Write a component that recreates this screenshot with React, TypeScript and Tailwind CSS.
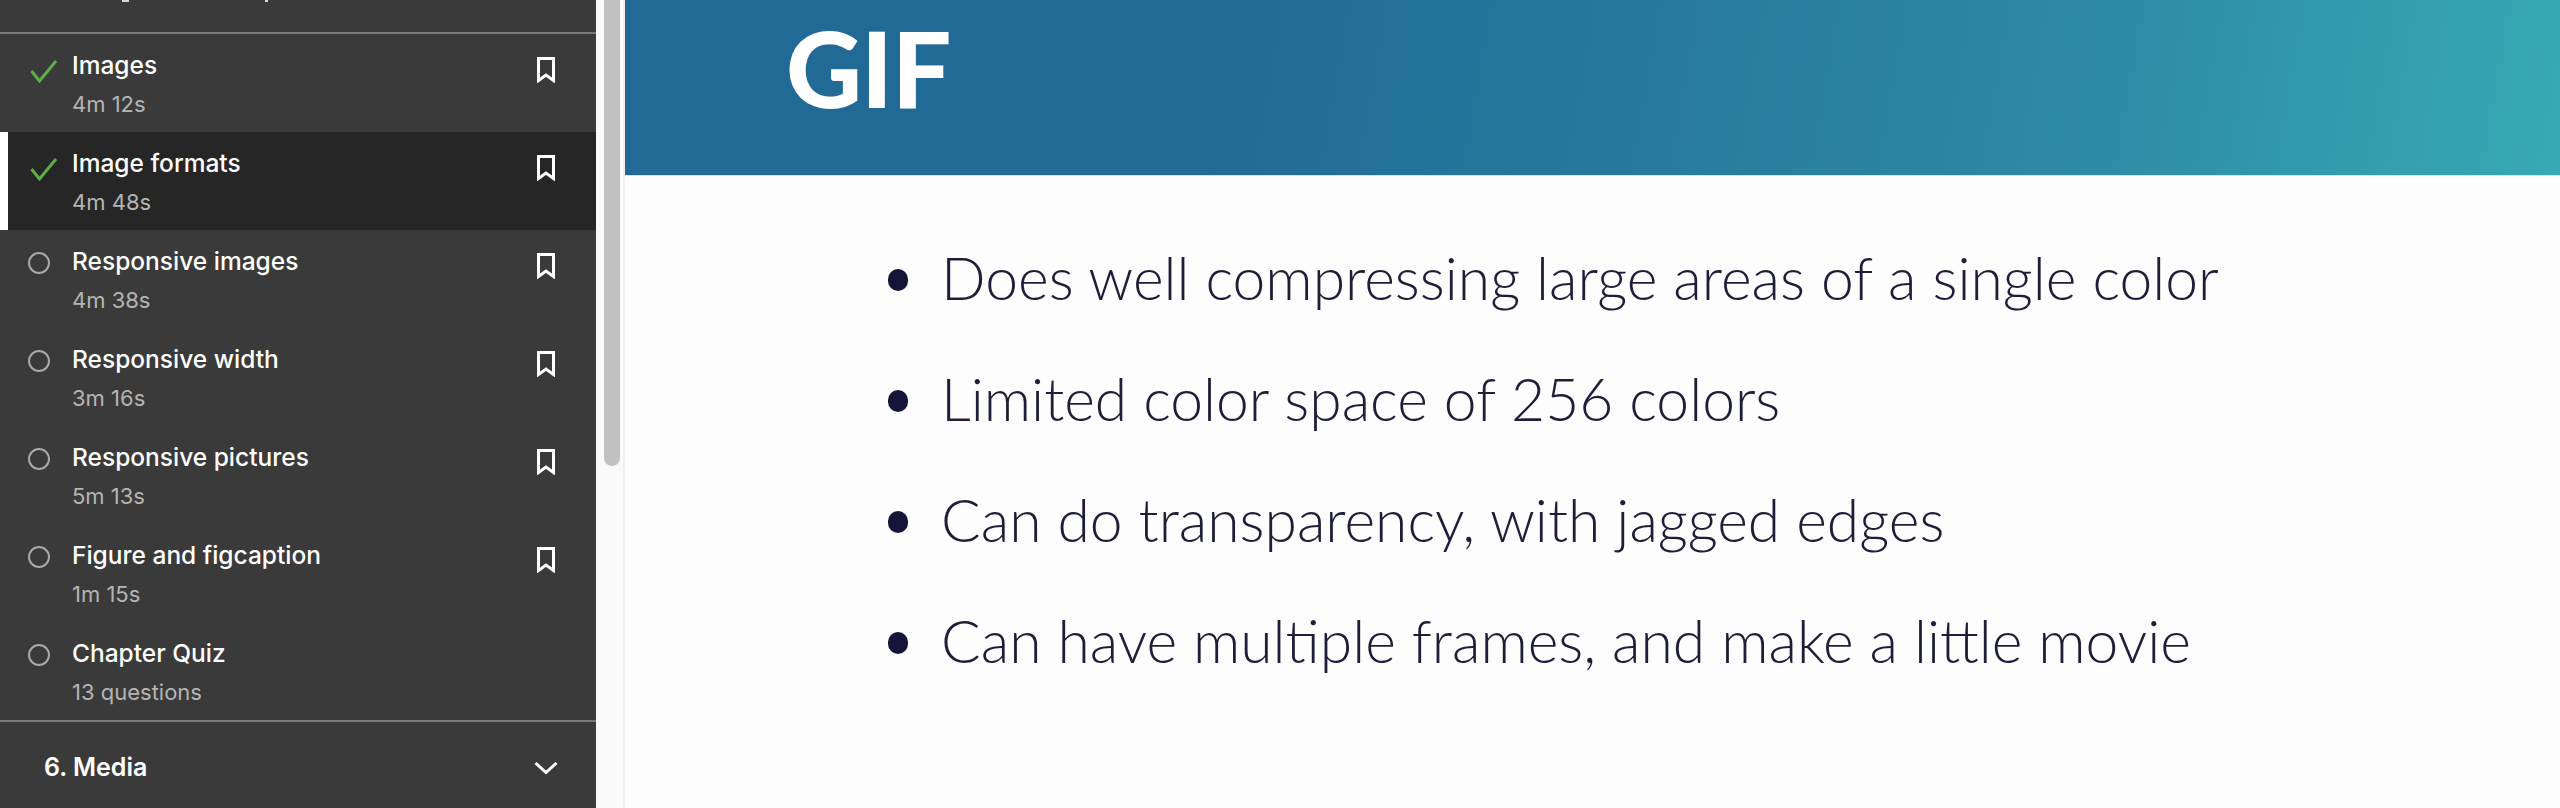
function Bookmark() {
  return (
    <svg width="22" height="26" viewBox="0 0 22 26" fill="none" className="shrink-0">
      <path d="M3.5 1.5H18.5V23.5L11 18L3.5 23.5Z" stroke="#fff" strokeWidth="3" />
    </svg>
  );
}
function Check() {
  return (
    <svg width="30" height="24" viewBox="0 0 30 24" fill="none" className="mt-[25px] ml-[30px] shrink-0">
      <path d="M1.5 12L9.5 22L26 2" stroke="#5dae45" strokeWidth="3" />
    </svg>
  );
}
function Circle() {
  return (
    <svg width="24" height="24" viewBox="0 0 24 24" fill="none" className="mt-[21px] ml-[27px] mr-[9px] shrink-0">
      <circle cx="12" cy="12" r="10" stroke="#a9a9a9" strokeWidth="2" />
    </svg>
  );
}
type R = { t: string; s: string; done?: boolean; active?: boolean; nomark?: boolean };
const rows: R[] = [
  { t: "Images", s: "4m 12s", done: true },
  { t: "Image formats", s: "4m 48s", done: true, active: true },
  { t: "Responsive images", s: "4m 38s" },
  { t: "Responsive width", s: "3m 16s" },
  { t: "Responsive pictures", s: "5m 13s" },
  { t: "Figure and figcaption", s: "1m 15s" },
  { t: "Chapter Quiz", s: "13 questions", nomark: true },
];
const points = [
  "Does well compressing large areas of a single color",
  "Limited color space of 256 colors",
  "Can do transparency, with jagged edges",
  "Can have multiple frames, and make a little movie",
];
function Row({ r }: { r: R }) {
  return (
    <div className={`flex h-[98px] ${r.active ? "bg-[#262626]" : ""}`}>
      {r.active ? <div className="w-[8px] h-full bg-white -mr-[8px] shrink-0 z-10" /> : null}
      {r.done ? <Check /> : <Circle />}
      <div className="ml-[12px] flex-1 pt-[13px]">
        <div className="text-[24.5px] leading-[36px] font-medium text-white">{r.t}</div>
        <div className="text-[22px] leading-[28px] mt-[7px] text-[#b4b4b4]">{r.s}</div>
      </div>
      {r.nomark ? null : (
        <div className="mr-[39px] mt-[23px]">
          <Bookmark />
        </div>
      )}
    </div>
  );
}
export default function App() {
  return (
    <div className="flex h-[808px] w-[2560px] overflow-hidden bg-[#fdfdfd]">
      <aside className="w-[596px] shrink-0 bg-[#3a3a3a] font-['Inter',sans-serif]">
        <div className="h-[32px] flex items-start" aria-hidden="true">
          <div className="ml-[122px] w-[7px] h-[2px] bg-[#d8d8d8]" />
          <div className="ml-[136px] w-[3px] h-[2px] bg-[#d8d8d8]" />
        </div>
        <div className="h-[2px] bg-[#7a7a7a]" />
        {rows.map((r) => (
          <Row key={r.t} r={r} />
        ))}
        <div className="h-[2px] bg-[#7a7a7a]" />
        <div className="h-[86px] flex items-center justify-between pl-[44px] pr-[38px] pt-[6px] text-white">
          <span className="text-[25px] font-semibold">6. Media</span>
          <svg width="24" height="14" viewBox="0 0 24 14" fill="none">
            <path d="M1.5 2L12 11.5L22.5 2" stroke="#fff" strokeWidth="3" />
          </svg>
        </div>
      </aside>
      <div className="w-[29px] shrink-0 bg-[#fafafa] border-r-2 border-[#f1f1f1] pl-[8px]">
        <div className="w-[16px] h-[466px] bg-[#c1c1c1] rounded-b-[8px]" />
      </div>
      <main className="flex-1 font-['Lato',sans-serif]">
        <header className="h-[176px] border-b border-[#b8efe9] bg-[linear-gradient(100deg,#226a96_0%,#226a96_30%,#2d8aa4_75%,#37aab5_100%)] pl-[161px] pt-[2px]">
          <h1 className="text-[105px] leading-[130px] font-black text-white tracking-[-1px]">GIF</h1>
        </header>
        <ul className="mt-[64px] pl-[263px] flex flex-col gap-[45px]">
          {points.map((p) => (
            <li key={p} className="flex items-center h-[76px] text-[58.75px] leading-[76px] font-light text-[#1e1e38]">
              <span className="w-[20px] h-[22px] rounded-full bg-[#15153a] mr-[33px] mt-[4px] shrink-0" />
              <span className="whitespace-nowrap">{p}</span>
            </li>
          ))}
        </ul>
      </main>
    </div>
  );
}
